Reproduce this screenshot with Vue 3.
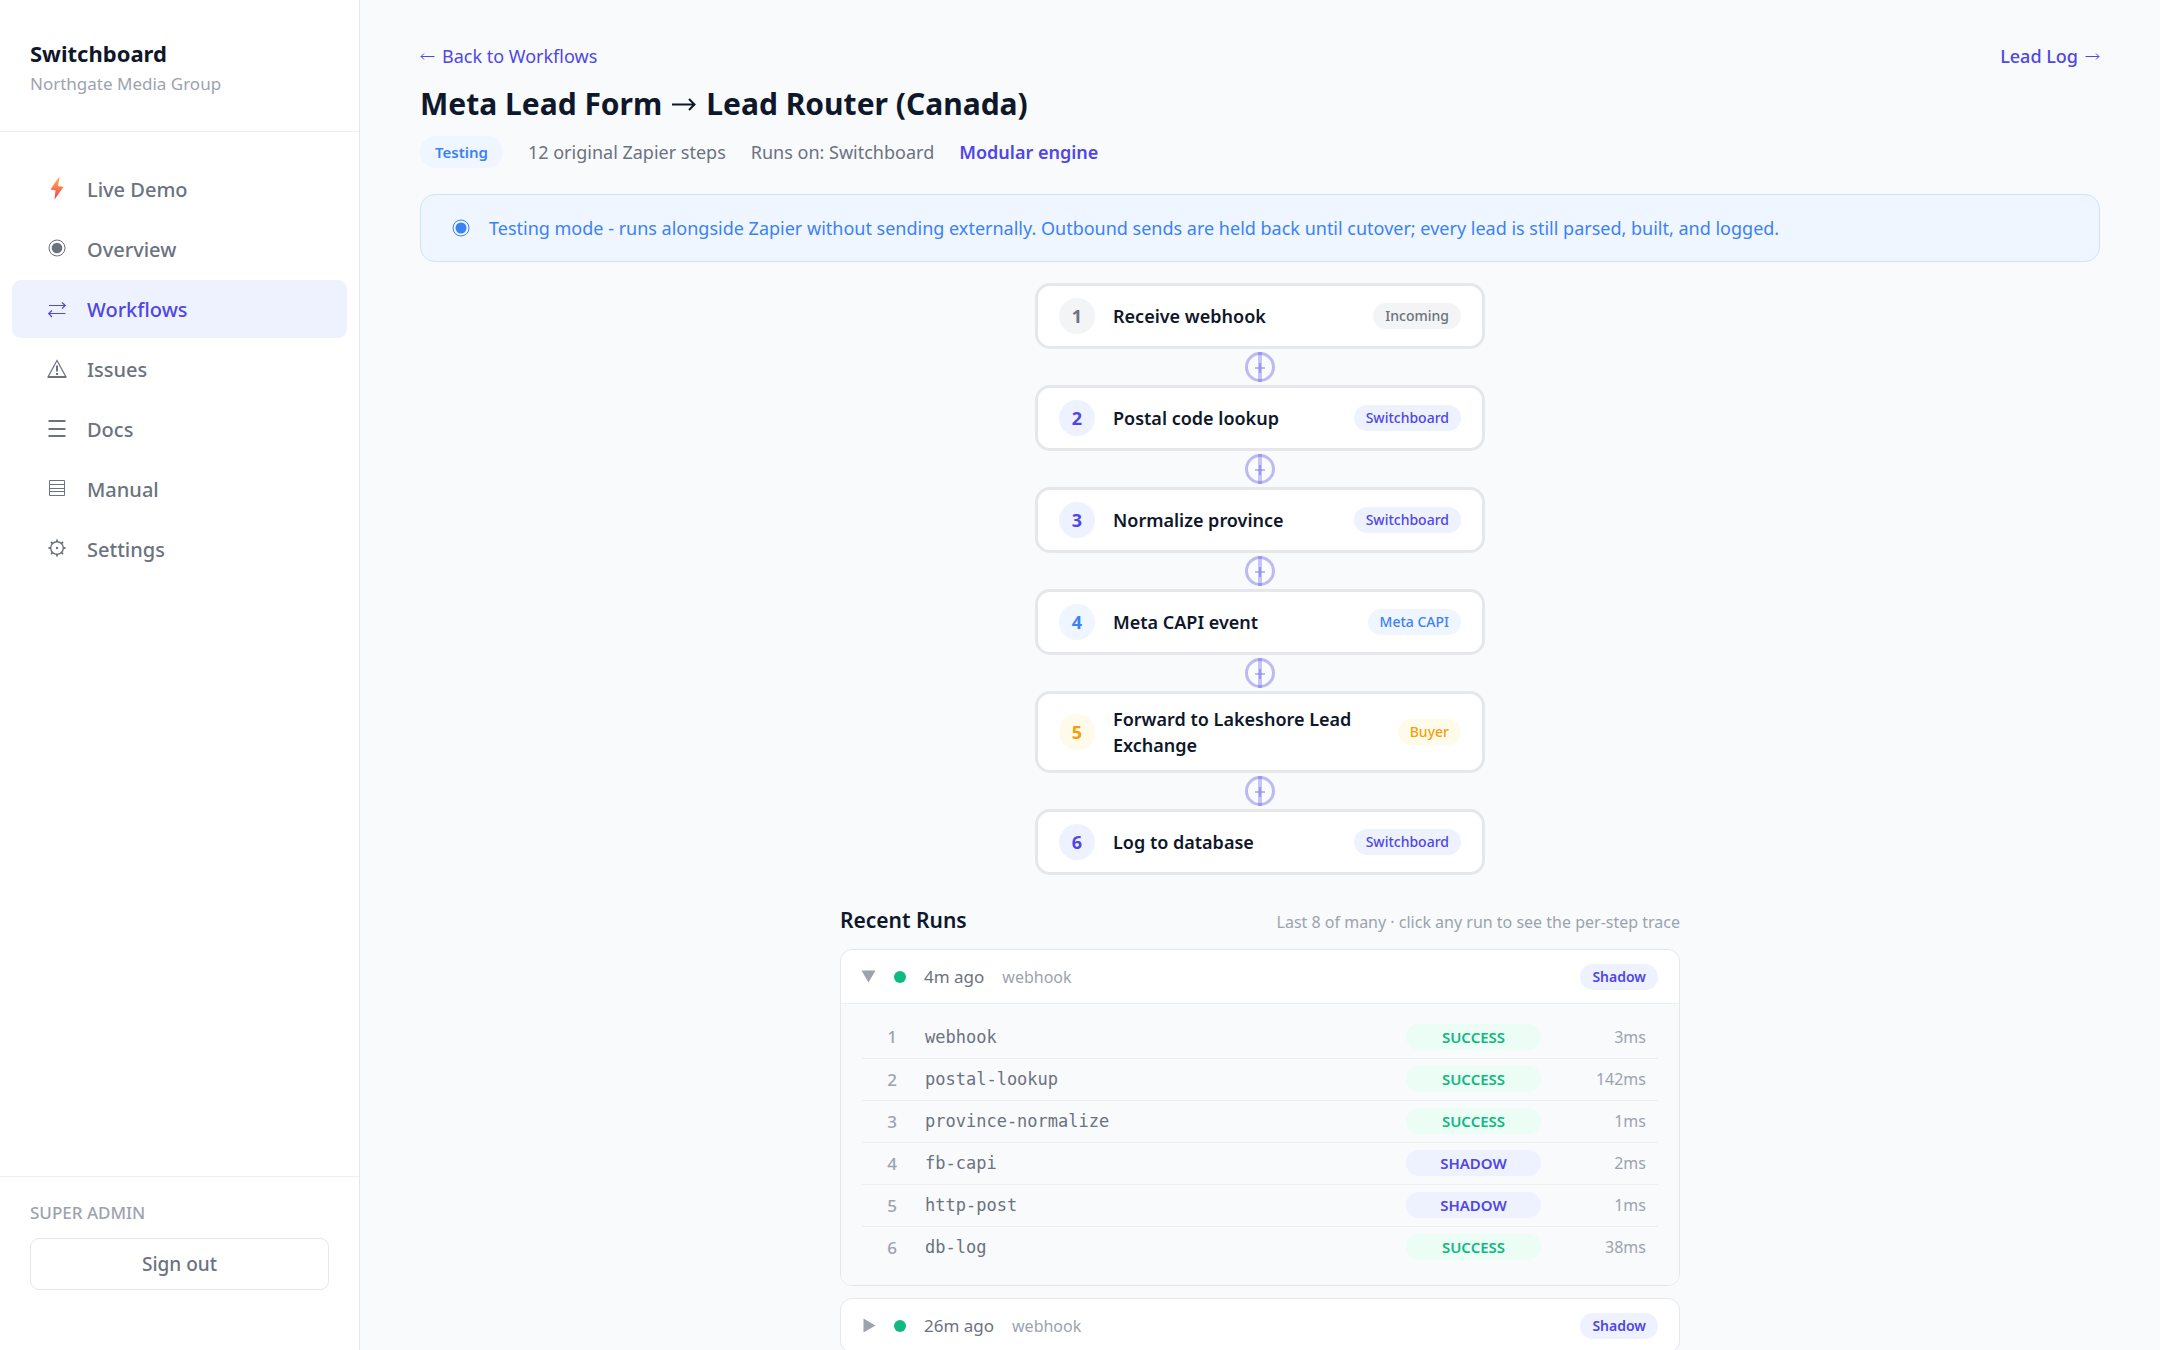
<script setup>
import { ref } from 'vue'

const nav = [
  { label: 'Live Demo', icon: 'bolt' },
  { label: 'Overview', icon: 'target' },
  { label: 'Workflows', icon: 'swap', active: true },
  { label: 'Issues', icon: 'warning' },
  { label: 'Docs', icon: 'lines' },
  { label: 'Manual', icon: 'sheet' },
  { label: 'Settings', icon: 'gear' },
]

const steps = [
  { name: 'Receive webhook', tag: 'Incoming', tone: 'gray' },
  { name: 'Postal code lookup', tag: 'Switchboard', tone: 'indigo' },
  { name: 'Normalize province', tag: 'Switchboard', tone: 'indigo' },
  { name: 'Meta CAPI event', tag: 'Meta CAPI', tone: 'blue' },
  { name: 'Forward to Lakeshore Lead Exchange', tag: 'Buyer', tone: 'amber' },
  { name: 'Log to database', tag: 'Switchboard', tone: 'indigo' },
]

const trace = [
  { name: 'webhook', status: 'Success', time: '3ms' },
  { name: 'postal-lookup', status: 'Success', time: '142ms' },
  { name: 'province-normalize', status: 'Success', time: '1ms' },
  { name: 'fb-capi', status: 'Shadow', time: '2ms' },
  { name: 'http-post', status: 'Shadow', time: '1ms' },
  { name: 'db-log', status: 'Success', time: '38ms' },
]

const runs = [
  { when: '4m ago', source: 'webhook', mode: 'Shadow' },
  { when: '26m ago', source: 'webhook', mode: 'Shadow' },
]

const openRun = ref(0)
const toggle = (i) => {
  openRun.value = openRun.value === i ? -1 : i
}
</script>

<template>
  <div class="app">
    <aside class="sidebar">
      <div class="brand">
        <div class="brand-name">Switchboard</div>
        <div class="brand-org">Northgate Media Group</div>
      </div>
      <nav class="nav">
        <a v-for="item in nav" :key="item.label" href="#" class="nav-item" :class="{ active: item.active }">
          <svg class="nav-icon" viewBox="0 0 24 24" fill="none" stroke="currentColor" aria-hidden="true">
            <template v-if="item.icon === 'bolt'">
              <defs>
                <linearGradient id="bolt" x1="0" y1="0" x2="0" y2="1">
                  <stop offset="0" stop-color="#ffb443" />
                  <stop offset="1" stop-color="#f2385a" />
                </linearGradient>
              </defs>
              <path d="M13.500 0.500 5.500 12.500 10.500 13.500 9.500 22.500 18.500 10 13 9 14.500 0.500Z" fill="url(#bolt)" stroke="none" />
            </template>
            <template v-else-if="item.icon === 'target'">
              <circle cx="12" cy="11" r="8" />
              <circle cx="12" cy="11" r="5.300" fill="currentColor" stroke="none" />
            </template>
            <path v-else-if="item.icon === 'swap'" d="M4 8.500H20M17 5.500l3.300 3-3.300 3M20.500 16.500H4M7 13.500l-3.300 3 3.300 3.500" stroke-width="1.200" />
            <template v-else-if="item.icon === 'warning'">
              <path d="M12 3.500 3 20H21Z" stroke-width="1.200" />
              <path d="M3 20H21" stroke-width="2" />
              <path d="M12 8.500v6M12 16v2" stroke-width="2" />
            </template>
            <path v-else-if="item.icon === 'lines'" d="M3.500 4H20.500M3.500 12H20.500M3.500 19H20.500" stroke-width="2" />
            <path v-else-if="item.icon === 'sheet'" d="M4.500 3.500h15v15h-15ZM4.500 7.500h15M4.500 11.500h15M4.500 14.500h15" />
            <template v-else>
              <circle cx="12" cy="11" r="6.300" stroke-width="1.400" />
              <circle cx="12" cy="11" r="1.200" fill="currentColor" stroke="none" />
              <path d="M12 5V2.500M12 17v2.500M6 11H3.500M18 11h2.500M7.700 6.700 6 5M16.300 6.700 18 5M7.700 15.300 6 17M16.300 15.300 18 17" stroke-width="1.800" />
            </template>
          </svg>
          <span>{{ item.label }}</span>
        </a>
      </nav>
      <div class="account">
        <div class="role">SUPER ADMIN</div>
        <button type="button" class="sign-out">Sign out</button>
      </div>
    </aside>

    <main class="main">
      <div class="links">
        <a href="#" class="link">
          <svg class="arrow" viewBox="0 0 15 12" aria-hidden="true"><path d="M14.500 6.500H1M4 3.500l-3 3 3 3" /></svg>
          <span>Back to Workflows</span>
        </a>
        <a href="#" class="link strong">
          <span>Lead Log</span>
          <svg class="arrow" viewBox="0 0 15 12" aria-hidden="true"><path d="M0.500 6.500H14M11 3.500l3 3-3 3" /></svg>
        </a>
      </div>
      <h1 class="title">
        <span>Meta Lead Form</span>
        <svg class="title-arrow" viewBox="0 0 24 18" role="img" aria-label="to"><path d="M0 9.500H22.500M17 4l5.500 5.500-5.500 5.500" /></svg>
        <span>Lead Router (Canada)</span>
      </h1>
      <div class="meta">
        <span class="badge">Testing</span>
        <span>12 original Zapier steps</span>
        <span>Runs on: Switchboard</span>
        <span class="engine">Modular engine</span>
      </div>

      <div class="banner">
        <svg class="banner-icon" viewBox="0 0 18 18" aria-hidden="true">
          <circle cx="9" cy="9" r="8" fill="none" stroke="currentColor" />
          <circle cx="9" cy="9" r="5.500" fill="currentColor" />
        </svg>
        <span>Testing mode - runs alongside Zapier without sending externally. Outbound sends are held back until cutover; every lead is still parsed, built, and logged.</span>
      </div>

      <div class="flow">
        <template v-for="(step, i) in steps" :key="step.name">
          <div v-if="i" class="connector">
            <button type="button" class="add" aria-label="Add step">
              <svg viewBox="0 0 30 30" aria-hidden="true">
                <circle cx="15" cy="15" r="13.500" fill="#fff" stroke="#4f46e5" stroke-width="3" />
                <path d="M10 16H20M15 11V21" stroke="#4f46e5" stroke-width="2" />
              </svg>
            </button>
          </div>
          <div class="step">
            <span class="num" :class="step.tone">{{ i + 1 }}</span>
            <span class="step-name">{{ step.name }}</span>
            <span class="tag" :class="step.tone">{{ step.tag }}</span>
          </div>
        </template>
      </div>

      <section class="runs">
        <div class="runs-head">
          <h2>Recent Runs</h2>
          <span>Last 8 of many · click any run to see the per-step trace</span>
        </div>
        <div v-for="(run, i) in runs" :key="run.when" class="run">
          <button type="button" class="run-head" :aria-expanded="openRun === i" @click="toggle(i)">
            <svg class="caret" viewBox="0 0 15 15" aria-hidden="true">
              <path v-if="openRun === i" d="M0.500 1.500H14.500L7.500 13.500Z" />
              <path v-else d="M2.500 0.500V14.500L14.500 7.500Z" />
            </svg>
            <span class="dot"></span>
            <span class="when">{{ run.when }}</span>
            <span class="source">{{ run.source }}</span>
            <span class="tag indigo bold">{{ run.mode }}</span>
          </button>
          <div v-if="openRun === i" class="run-body">
            <table class="trace">
              <tbody>
                <tr v-for="(row, n) in trace" :key="row.name">
                  <td class="t-num">{{ n + 1 }}</td>
                  <td class="t-name">{{ row.name }}</td>
                  <td class="t-status"><span class="status" :class="row.status === 'Success' ? 'green' : 'indigo'">{{ row.status }}</span></td>
                  <td class="t-time">{{ row.time }}</td>
                </tr>
              </tbody>
            </table>
          </div>
        </div>
      </section>
    </main>
  </div>
</template>

<style>
body {
  margin: 0;
  background: #f8fafc;
}
</style>

<style scoped>
* {
  box-sizing: border-box;
}
.app {
  display: flex;
  height: 100vh;
  font-family: "Noto Sans", "Open Sans", sans-serif;
  font-size: 18px;
  color: #6b7280;
}
a {
  text-decoration: none;
}
button {
  font: inherit;
  cursor: pointer;
}
.sidebar {
  flex: 0 0 360px;
  display: flex;
  flex-direction: column;
  background: #fff;
  border-right: 1px solid #e5e7eb;
}
.brand {
  height: 132px;
  padding: 37px 30px 0;
  border-bottom: 1px solid #eeeff1;
}
.brand-name {
  font-size: 22px;
  line-height: 32px;
  font-weight: 700;
  color: #0f172a;
}
.brand-org {
  font-size: 17px;
  line-height: 30px;
  color: #9ca3af;
}
.nav {
  flex: 1;
  display: flex;
  flex-direction: column;
  gap: 2px;
  padding: 28px 12px;
}
.nav-item {
  display: flex;
  align-items: center;
  gap: 18px;
  height: 58px;
  padding: 0 33px;
  border-radius: 9px;
  font-size: 20px;
  font-weight: 500;
  color: #6b7280;
}
.nav-item.active {
  background: #eef2ff;
  color: #4f46e5;
}
.nav-icon {
  width: 24px;
  height: 24px;
}
.account {
  padding: 22px 30px 60px;
  border-top: 1px solid #eeeff1;
}
.role {
  margin-bottom: 11px;
  font-size: 17px;
  line-height: 28px;
  font-weight: 500;
  color: #9ca3af;
}
.sign-out {
  width: 100%;
  height: 52px;
  border: 1px solid #e5e7eb;
  border-radius: 9px;
  background: #fff;
  font-size: 19px;
  font-weight: 500;
  color: #6b7280;
}
.main {
  flex: 1;
  min-width: 0;
  padding: 40px 60px 60px;
  overflow-y: auto;
  scrollbar-width: none;
}
.links {
  display: flex;
  justify-content: space-between;
}
.link {
  display: flex;
  align-items: center;
  gap: 7px;
  line-height: 32px;
  color: #4f46e5;
}
.link.strong {
  font-weight: 500;
}
.arrow {
  width: 15px;
  height: 12px;
}
.arrow path,
.title-arrow path {
  fill: none;
  stroke: currentColor;
}
.title {
  display: flex;
  align-items: center;
  gap: 10px;
  margin: 8px 0;
  font-size: 30px;
  line-height: 48px;
  font-weight: 700;
  color: #0f172a;
}
.title-arrow {
  width: 24px;
  height: 18px;
}
.title-arrow path {
  stroke-width: 2;
}
.meta {
  display: flex;
  align-items: center;
  gap: 25px;
  height: 32px;
}
.badge {
  padding: 0 15px;
  border-radius: 16px;
  background: #eff6ff;
  font-size: 15px;
  line-height: 32px;
  font-weight: 600;
  color: #3b82f6;
}
.engine {
  font-weight: 600;
  color: #4f46e5;
}
.banner {
  display: flex;
  align-items: center;
  gap: 19px;
  min-height: 68px;
  margin-top: 26px;
  padding: 12px 31px;
  border: 1px solid #cfe1fd;
  border-radius: 15px;
  background: #eff6ff;
  color: #3b82f6;
}
.banner-icon {
  flex: none;
  width: 18px;
  height: 18px;
}
.flow {
  width: 450px;
  margin: 21px auto 0;
}
.step {
  display: flex;
  align-items: center;
  gap: 18px;
  min-height: 66px;
  padding: 12px 21px;
  border: 3px solid #e5e7eb;
  border-radius: 15px;
  background: #fff;
}
.num {
  flex: none;
  width: 36px;
  border-radius: 50%;
  font-size: 18px;
  line-height: 36px;
  font-weight: 700;
  text-align: center;
}
.step-name {
  flex: 1;
  font-size: 18px;
  line-height: 26px;
  font-weight: 600;
  color: #0f172a;
}
.tag {
  flex: none;
  padding: 0 12px;
  border-radius: 13px;
  font-size: 14px;
  line-height: 26px;
  font-weight: 500;
}
.tag.bold {
  font-weight: 600;
}
.gray {
  background: #f3f4f6;
  color: #6b7280;
}
.indigo {
  background: #eef2ff;
  color: #4f46e5;
}
.blue {
  background: #eff6ff;
  color: #3b82f6;
}
.amber {
  background: #fffbeb;
  color: #f59e0b;
}
.green {
  background: #ecfdf5;
  color: #10b981;
}
.connector {
  position: relative;
  display: flex;
  justify-content: center;
  padding: 3px 0;
}
.connector::after {
  content: "";
  position: absolute;
  top: 3px;
  bottom: 3px;
  left: calc(50% - 2px);
  width: 4px;
  background: #4f46e5;
  opacity: 0.3;
}
.add {
  display: block;
  width: 30px;
  height: 30px;
  padding: 0;
  border: 0;
  border-radius: 50%;
  background: none;
  opacity: 0.35;
}
.add svg {
  display: block;
}
.runs {
  max-width: 840px;
  margin: 29px auto 0;
}
.runs-head {
  display: flex;
  align-items: baseline;
  justify-content: space-between;
  margin-bottom: 10px;
  font-size: 16px;
  line-height: 33px;
  color: #9ca3af;
}
.runs-head h2 {
  margin: 0;
  font-size: 21px;
  font-weight: 600;
  color: #0f172a;
}
.run {
  margin-bottom: 12px;
  border: 1px solid #e5e7eb;
  border-radius: 12px;
  background: #fff;
  overflow: hidden;
}
.run-head {
  display: flex;
  align-items: center;
  gap: 18px;
  width: 100%;
  height: 53px;
  padding: 0 21px 0 20px;
  border: 0;
  background: none;
  font-size: 17px;
  text-align: left;
}
.caret {
  width: 15px;
  height: 15px;
  fill: #9ca3af;
}
.dot {
  width: 12px;
  height: 12px;
  border-radius: 50%;
  background: #10b981;
}
.when {
  color: #6b7280;
}
.source {
  flex: 1;
  font-size: 16px;
  color: #9ca3af;
}
.run-body {
  padding: 12px 21px 17px;
  border-top: 1px solid #eeeff1;
  background: #f8fafc;
}
.trace {
  width: 100%;
  table-layout: fixed;
  border-collapse: collapse;
}
.trace td {
  height: 42px;
  padding: 0;
  border-bottom: 1px solid #eeeff1;
}
.trace tr:last-child td {
  border-bottom: 0;
}
.trace .t-num {
  width: 63px;
  padding: 0 15px 0 12px;
  font-size: 17px;
  font-weight: 500;
  color: #9ca3af;
  text-align: center;
}
.t-name {
  font-family: "DejaVu Sans Mono", "Liberation Mono", monospace;
  font-size: 17px;
}
.t-status {
  width: 135px;
}
.status {
  display: block;
  border-radius: 13px;
  font-size: 15px;
  line-height: 26px;
  font-weight: 600;
  text-align: center;
  text-transform: uppercase;
}
.trace .t-time {
  width: 117px;
  padding-right: 12px;
  font-size: 16px;
  color: #9ca3af;
  text-align: right;
}
</style>
